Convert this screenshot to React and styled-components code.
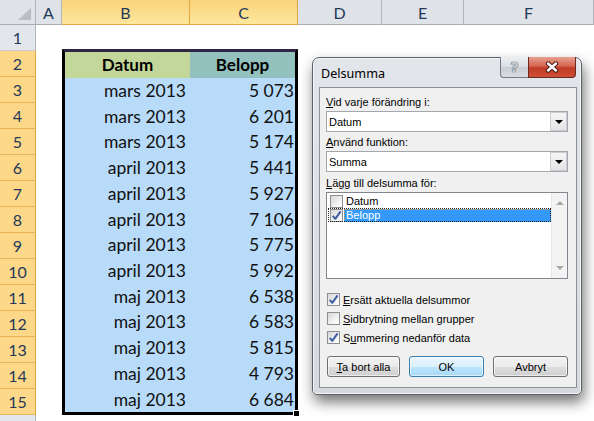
import React from 'react'
import styled, {createGlobalStyle} from 'styled-components'

const GlobalStyle = createGlobalStyle`
  html, body {
    margin: 0;
    padding: 0;
    background: #fff;
  }
  body {
    width: 594px;
    height: 421px;
    overflow: hidden;
  }
`

const columns = ['A', 'B', 'C', 'D', 'E', 'F']
const selectedCols = ['B', 'C']

const data = [
    ['mars 2013', '5 073'],
    ['mars 2013', '6 201'],
    ['mars 2013', '5 174'],
    ['april 2013', '5 441'],
    ['april 2013', '5 927'],
    ['april 2013', '7 106'],
    ['april 2013', '5 775'],
    ['april 2013', '5 992'],
    ['maj 2013', '6 538'],
    ['maj 2013', '6 583'],
    ['maj 2013', '5 815'],
    ['maj 2013', '4 793'],
    ['maj 2013', '6 684']
]

const CheckIcon = () => (
    <svg width='11' height='11' viewBox='0 0 11 11'>
        <path d='M1.8 5.8 L4.3 8.8 L9.6 1.4' fill='none' stroke='#3f5da3' strokeWidth='2' strokeLinejoin='round'/>
    </svg>
)

const Checkbox = ({checked}) => (
    <Box>{checked && <CheckIcon/>}</Box>
)

const App = () => {
    return (
        <>
            <GlobalStyle/>
            <Sheet>
                <Corner>
                    <svg width='16' height='14' viewBox='0 0 16 14'>
                        <polygon points='15,1 15,13 2,13' fill='#b9bec5'/>
                    </svg>
                </Corner>
                {columns.map((col) => (
                    <ColHeader key={col} $selected={selectedCols.includes(col)}>{col}</ColHeader>
                ))}
                {Array.from({length: 16}, (_, i) => (
                    <RowHeader key={i} $row={i + 2} $selected={i >= 1 && i <= 14}>
                        {i < 15 ? i + 1 : ''}
                    </RowHeader>
                ))}

                {/* table B2:C15 */}
                <Table>
                    <HeadCell $bg='#c4d79b'>Datum</HeadCell>
                    <HeadCell $bg='#93c1bd'>Belopp</HeadCell>
                    {data.map(([datum, belopp], index) => (
                        <React.Fragment key={index}>
                            <DataCell $pad={4}>{datum}</DataCell>
                            <DataCell $pad={1}>{belopp}</DataCell>
                        </React.Fragment>
                    ))}
                    <FillHandle/>
                </Table>

                {/* Delsumma dialog */}
                <Window>
                    <TitleBar>
                        <Title>Delsumma</Title>
                        <HelpButton>?</HelpButton>
                        <CloseButton>
                            <svg width='16' height='12' viewBox='0 0 16 12'>
                                <path d='M4 2.5 L12 9.5 M12 2.5 L4 9.5' stroke='#4a2019' strokeWidth='4.4' strokeLinecap='round'/>
                                <path d='M4 2.5 L12 9.5 M12 2.5 L4 9.5' stroke='#fff' strokeWidth='2.4' strokeLinecap='round'/>
                            </svg>
                        </CloseButton>
                    </TitleBar>
                    <Client>
                        <Label><u>V</u>id varje förändring i:</Label>
                        <Select>
                            <SelectText>Datum</SelectText>
                            <SelectArrow><Triangle/></SelectArrow>
                        </Select>
                        <Label $gap={3}><u>A</u>nvänd funktion:</Label>
                        <Select>
                            <SelectText>Summa</SelectText>
                            <SelectArrow><Triangle/></SelectArrow>
                        </Select>
                        <Label $gap={4}><u>L</u>ägg till delsumma för:</Label>
                        <ListBox>
                            <ListItems>
                                <ListItem>
                                    <Checkbox/>
                                    <ItemText>Datum</ItemText>
                                </ListItem>
                                <ListItem $focused>
                                    <Checkbox checked/>
                                    <ItemText $selected>Belopp</ItemText>
                                </ListItem>
                            </ListItems>
                            <ScrollBar>
                                <ScrollArrow $up/>
                                <ScrollArrow/>
                            </ScrollBar>
                        </ListBox>
                        <Options>
                            <Option>
                                <Checkbox checked/>
                                <span><u>E</u>rsätt aktuella delsummor</span>
                            </Option>
                            <Option>
                                <Checkbox/>
                                <span><u>S</u>idbrytning mellan grupper</span>
                            </Option>
                            <Option>
                                <Checkbox checked/>
                                <span>S<u>u</u>mmering nedanför data</span>
                            </Option>
                        </Options>
                        <Buttons>
                            <Button $w={73}><u>T</u>a bort alla</Button>
                            <Button $w={75} $default>OK</Button>
                            <Button $w={75}>Avbryt</Button>
                        </Buttons>
                    </Client>
                </Window>
            </Sheet>
        </>
    )
}

const Sheet = styled.div `
  position: relative;
  display: grid;
  grid-template-columns: 36px 26px 128px 108px 84px 82px 1fr;
  grid-template-rows: 25px repeat(16, 26px);
  width: 594px;
  height: 421px;
  overflow: hidden;
  background: #fff;
  font-family: Lato, 'Liberation Sans', sans-serif;
`

const Corner = styled.div `
  grid-row: 1;
  grid-column: 1;
  box-sizing: border-box;
  display: flex;
  align-items: flex-end;
  justify-content: flex-end;
  padding: 0 3px 3px 0;
  background: #dfe3e8;
  border-right: 1px solid #b1b5ba;
  border-bottom: 1px solid #a8adb3;
`

const ColHeader = styled.div `
  grid-row: 1;
  box-sizing: border-box;
  display: flex;
  align-items: center;
  justify-content: center;
  padding-top: 1px;
  font-size: 16px;
  color: #24385a;
  background: ${p => p.$selected
    ? 'linear-gradient(#f9d37c, #fde79c)'
    : '#dfe3e8'};
  border-right: 1px solid ${p => p.$selected ? '#e2a843' : '#b1b5ba'};
  border-bottom: 1px solid ${p => p.$selected ? '#e2a843' : '#a8adb3'};
`

const RowHeader = styled.div `
  grid-column: 1;
  grid-row: ${p => p.$row};
  box-sizing: border-box;
  display: flex;
  align-items: center;
  justify-content: center;
  font-size: 16px;
  color: #24385a;
  background: ${p => p.$selected ? '#fdd888' : '#e3e6ea'};
  border-right: 1px solid ${p => p.$selected ? '#e2a843' : '#b1b5ba'};
  border-bottom: 1px solid ${p => p.$selected ? '#e6b358' : '#c5c9ce'};
`

const Table = styled.div `
  grid-column: 3 / 5;
  grid-row: 3 / 17;
  position: relative;
  margin-top: -2px;
  box-sizing: border-box;
  border: 3px solid #000;
  border-top-color: #2f2644;
  display: grid;
  grid-template-columns: 125px 1fr;
  grid-template-rows: repeat(14, 1fr);
  background: #b8dbf9;
`

const HeadCell = styled.div `
  display: flex;
  align-items: center;
  justify-content: center;
  background: ${p => p.$bg};
  font-size: 17px;
  font-weight: 700;
  color: #000;
`

const DataCell = styled.div `
  display: flex;
  align-items: center;
  justify-content: flex-end;
  padding-right: ${p => p.$pad}px;
  font-size: 17.5px;
  color: #111;
`

const FillHandle = styled.div `
  position: absolute;
  right: -5px;
  bottom: -5px;
  width: 5px;
  height: 5px;
  background: #000;
  border: 1px solid #fff;
`

const Window = styled.div `
  position: absolute;
  left: 312px;
  top: 57px;
  width: 270px;
  height: 338px;
  box-sizing: border-box;
  display: flex;
  flex-direction: column;
  border: 1px solid #5d6166;
  border-radius: 7px 7px 5px 5px;
  background: linear-gradient(#e2e5e9, #d6dadf);
  box-shadow: inset 0 0 0 1px rgba(255, 255, 255, 0.7), 2px 7px 14px rgba(0, 0, 0, 0.55);
  font-family: 'Liberation Sans', Arial, sans-serif;
  font-size: 11px;
  color: #000;
`

const TitleBar = styled.div `
  height: 29px;
  display: flex;
  align-items: flex-start;
  padding-right: 5px;
`

const Title = styled.div `
  flex: 1;
  padding: 7px 0 0 8px;
  font-family: 'Noto Sans', 'Open Sans', sans-serif;
  font-size: 12.6px;
`

const CaptionButton = styled.div `
  flex: none;
  height: 21px;
  margin-top: -1px;
  box-sizing: border-box;
  display: flex;
  align-items: center;
  justify-content: center;
  border-top: none;
`

const HelpButton = styled(CaptionButton) `
  width: 28px;
  border: 1px solid #737a83;
  border-top: none;
  border-right: none;
  border-radius: 0 0 0 4px;
  background: linear-gradient(#eef0f3, #dadee3 48%, #c9ced5 52%, #d8dce1);
  font-family: 'DejaVu Sans', sans-serif;
  font-weight: 700;
  font-size: 14px;
  color: #c8cdd3;
  text-shadow: 0 0 1px #4c535c, 0 0 1px #4c535c;
`

const CloseButton = styled(CaptionButton) `
  width: 48px;
  border: 1px solid #6b2a20;
  border-top: none;
  border-radius: 0 0 4px 0;
  background: linear-gradient(#e7a190, #d4654f 45%, #c13b23 55%, #cf4f37);
`

const Client = styled.div `
  flex: 1;
  margin: 0 4px 6px 6px;
  padding: 7px 8px 0 6px;
  border: 1px solid #8b9096;
  background: #f0f0f0;
  display: flex;
  flex-direction: column;
`

const Label = styled.div `
  height: 15px;
  line-height: 15px;
  margin-top: ${p => p.$gap || 0}px;
  white-space: nowrap;
`

const Select = styled.div `
  margin-top: 1px;
  height: 21px;
  box-sizing: border-box;
  display: flex;
  border: 1px solid #a4a7ad;
  background: #fff;
`

const SelectText = styled.div `
  flex: 1;
  display: flex;
  align-items: center;
  padding-left: 2px;
`

const SelectArrow = styled.div `
  width: 17px;
  display: flex;
  align-items: center;
  justify-content: center;
  box-sizing: border-box;
  border: 1px solid #c9ccd1;
  background: linear-gradient(#f5f5f5, #e4e4e4);
`

const Triangle = styled.span `
  width: 0;
  height: 0;
  border-left: 4px solid transparent;
  border-right: 4px solid transparent;
  border-top: 4px solid #000;
`

const ListBox = styled.div `
  margin-top: 1px;
  height: 87px;
  box-sizing: border-box;
  display: flex;
  border: 1px solid #828790;
  background: #fff;
`

const ListItems = styled.div `
  flex: 1;
  padding: 1px 0 0 1px;
`

const ListItem = styled.div `
  height: 14px;
  display: flex;
  align-items: center;
  gap: 1px;
  padding-left: 2px;
  outline: ${p => p.$focused ? '1px dotted #222' : 'none'};
  outline-offset: -1px;
`

const ItemText = styled.div `
  flex: 1;
  height: 13px;
  line-height: 13px;
  padding-left: 2px;
  color: ${p => p.$selected ? '#fff' : '#000'};
  background: ${p => p.$selected ? '#3399ff' : 'transparent'};
  outline: ${p => p.$selected ? '1px dotted #e7a04d' : 'none'};
  outline-offset: -1px;
`

const ScrollBar = styled.div `
  width: 16px;
  display: flex;
  flex-direction: column;
  justify-content: space-between;
  align-items: center;
  padding: 8px 0 8px;
  box-sizing: border-box;
  background: #f3f3f3;
  border-left: 1px solid #e6e6e6;
`

const ScrollArrow = styled.span `
  width: 0;
  height: 0;
  border-left: 4px solid transparent;
  border-right: 4px solid transparent;
  ${p => p.$up
    ? 'border-bottom: 4px solid #a7a7a7;'
    : 'border-top: 4px solid #a7a7a7;'}
`

const Box = styled.span `
  width: 13px;
  height: 13px;
  box-sizing: border-box;
  flex: none;
  display: flex;
  align-items: center;
  justify-content: center;
  border: 1px solid #8e8f8f;
  background: linear-gradient(135deg, #d7d7d7, #f6f6f6 70%, #fff);
`

const Options = styled.div `
  margin-top: 11px;
  display: flex;
  flex-direction: column;
`

const Option = styled.div `
  height: 19px;
  display: flex;
  align-items: center;
  gap: 3px;
  padding-left: 1px;
`

const Buttons = styled.div `
  margin-top: 9px;
  display: flex;
  justify-content: space-between;
  padding-left: 1px;
`

const Button = styled.button `
  width: ${p => p.$w}px;
  height: 21px;
  box-sizing: border-box;
  padding: 0;
  border: 1px solid ${p => p.$default ? '#3c7fb1' : '#707070'};
  border-radius: 3px;
  background: ${p => p.$default
    ? 'linear-gradient(#eaf6fd, #d9f0fc 50%, #bee6fd 51%, #a7d9f5)'
    : 'linear-gradient(#f2f2f2, #ebebeb 50%, #dddddd 51%, #cfcfcf)'};
  box-shadow: inset 0 0 0 1px rgba(255, 255, 255, 0.6);
  font: inherit;
  color: #000;
`

export default App
